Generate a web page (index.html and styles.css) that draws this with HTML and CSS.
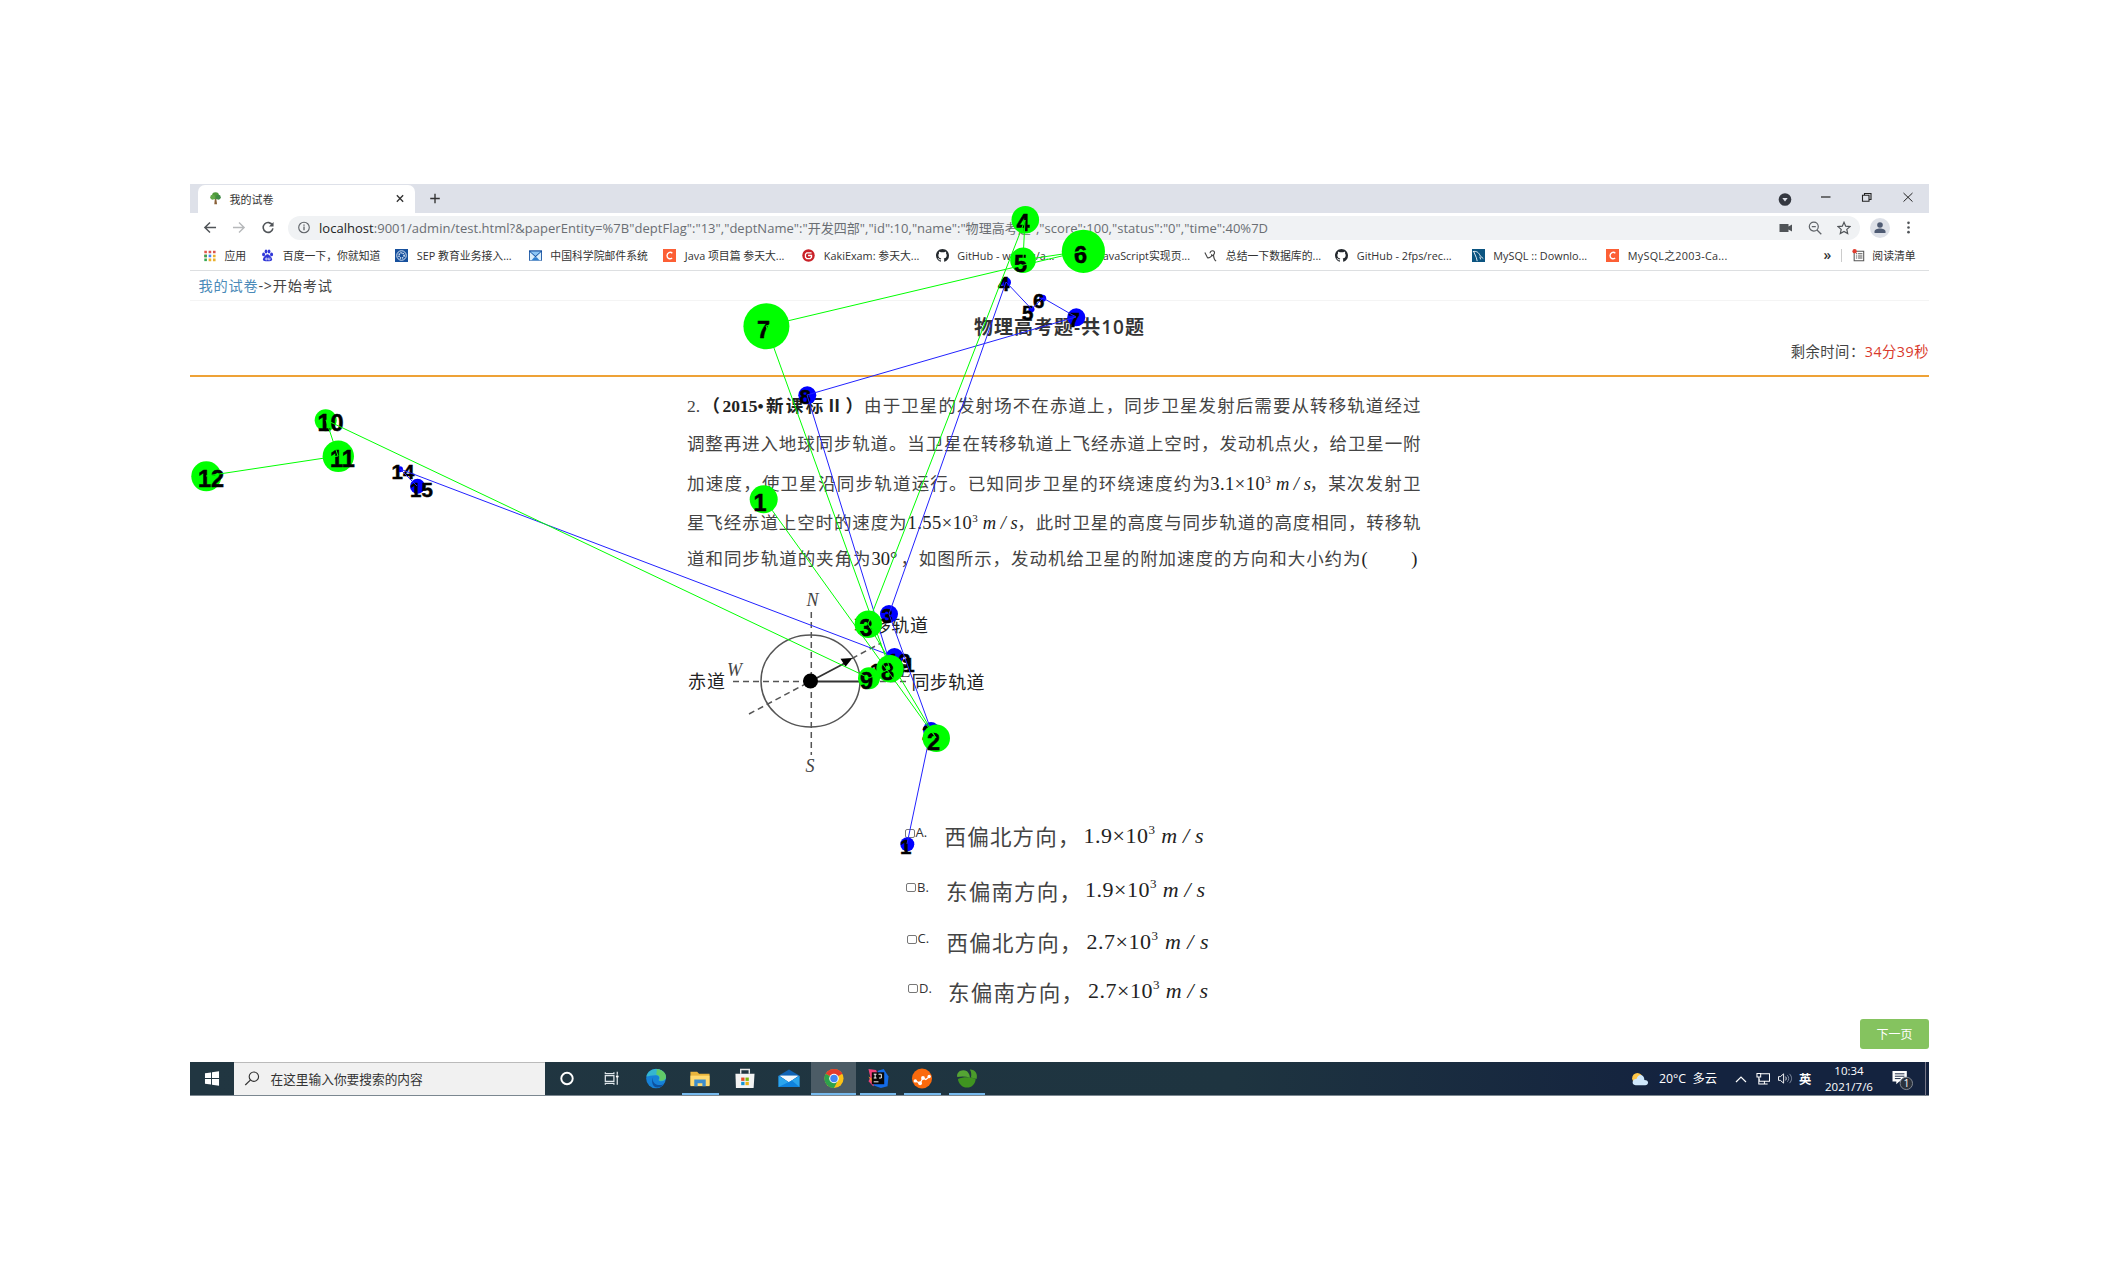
FILE: index.html
```html
<!DOCTYPE html>
<html lang="zh-CN">
<head>
<meta charset="utf-8">
<title>我的试卷</title>
<link rel="stylesheet" href="styles.css">
</head>
<body>
<svg width="0" height="0" class="defs">
  <symbol id="github" viewBox="0 0 16 16"><path fill="#24292e" d="M8 0C3.58 0 0 3.58 0 8c0 3.54 2.29 6.53 5.47 7.59.4.07.55-.17.55-.38v-1.49c-2.01.37-2.53-.49-2.69-.94-.09-.23-.48-.94-.82-1.13-.28-.15-.68-.52-.01-.53.63-.01 1.08.58 1.23.82.72 1.21 1.87.87 2.33.66.07-.52.28-.87.51-1.07-1.78-.2-3.64-.89-3.64-3.95 0-.87.31-1.59.82-2.15-.08-.2-.36-1.02.08-2.12 0 0 .67-.21 2.2.82a7.6 7.6 0 0 1 4 0c1.53-1.04 2.2-.82 2.2-.82.44 1.1.16 1.92.08 2.12.51.56.82 1.27.82 2.15 0 3.07-1.87 3.75-3.65 3.95.29.25.54.73.54 1.48v2.2c0 .21.15.46.55.38A8 8 0 0 0 16 8c0-4.42-3.58-8-8-8z"/></symbol>
  <symbol id="csdn" viewBox="0 0 16 16"><rect width="16" height="16" fill="#fc5f35"/><path d="M11.5 5.2C9 2.8 5 4.500 5 8.200c0 3.600 3.600 4.800 6.300 2.800" fill="none" stroke="#fff" stroke-width="1.700"/></symbol>
</svg>
<div class="window">
  <header class="tabs">
    <div class="tab">
      <svg class="i14" viewBox="0 0 16 16"><path d="M7.300 8h1.600l1 7H6.500z" fill="#8a6038"/><circle cx="8" cy="4.500" r="4.300" fill="#4e9a3b"/><circle cx="4.500" cy="6.500" r="3" fill="#63a94a"/><circle cx="11.500" cy="6.500" r="3" fill="#3f8a45"/></svg>
      <span>我的试卷</span>
      <svg class="close" viewBox="0 0 10 10"><path d="M1.500 1.500l7 7m0-7l-7 7" stroke="#333" stroke-width="1.500"/></svg>
    </div>
    <svg class="plus" viewBox="0 0 12 12"><path d="M6 .8v10.400M.8 6h10.400" stroke="#333" stroke-width="1.500"/></svg>
    <div class="controls">
      <svg viewBox="0 0 14 14"><circle cx="7" cy="7.500" r="6.300" fill="#343840"/><path d="M4.300 6h5.400L7 9.500z" fill="#dee1e9"/></svg>
      <svg viewBox="0 0 14 14"><path d="M2 5h9.500" stroke="#222" stroke-width="1.200"/></svg>
      <svg viewBox="0 0 14 14"><path d="M2.500 3.300h6.500v6h-6.500zM4.500 3V1.500h6.500v6h-2" fill="none" stroke="#222" stroke-width="1.100"/></svg>
      <svg viewBox="0 0 14 14"><path d="M2.500 1l9 8.600m0-8.600l-9 8.600" stroke="#222" stroke-width="1"/></svg>
    </div>
  </header>
  <div class="toolbar">
    <svg class="nav" viewBox="0 0 14 14"><path d="M13.500 7H1.500M7 1.700L1.500 7 7 12.300" fill="none" stroke="#505458" stroke-width="1.600"/></svg>
    <svg class="nav" viewBox="0 0 14 14"><path d="M.5 7h12M7 1.700L12.500 7 7 12.300" fill="none" stroke="#b6b8ba" stroke-width="1.500"/></svg>
    <svg class="nav" viewBox="0 0 14 14"><path d="M11.800 4.500A5.300 5.300 0 1 0 12.300 8" fill="none" stroke="#505458" stroke-width="1.700"/><path d="M13 1v5H8z" fill="#505458"/></svg>
    <div class="pill">
      <svg class="info" viewBox="0 0 14 14"><circle cx="7" cy="7" r="5.700" fill="none" stroke="#5f6368" stroke-width="1.200"/><path d="M7 6v4M7 3.700v1.300" stroke="#5f6368" stroke-width="1.400"/></svg>
      <span class="url"><b>localhost</b>:9001/admin/test.html?&amp;paperEntity=%7B"deptFlag":"13","deptName":"开发四部","id":10,"name":"物理高考题","score":100,"status":"0","time":40%7D</span>
      <div class="pill-icons">
        <svg viewBox="0 0 14 14"><path d="M.5 3h9v2.500L13 3.500v7L9.500 8.500V11h-9z" fill="#505458"/></svg>
        <svg viewBox="0 0 14 14"><circle cx="5.800" cy="5.600" r="4.500" fill="none" stroke="#5f6368" stroke-width="1.200"/><path d="M9 9l4.300 4.300M3.800 5.600h4" stroke="#5f6368" stroke-width="1.300"/></svg>
        <svg viewBox="0 0 14 14"><path d="M7 1.300l1.700 3.900 4.300.4-3.200 2.800.9 4.200L7 10.500l-3.700 2.100.9-4.200L1 5.600l4.300-.4z" fill="none" stroke="#505458" stroke-width="1.200"/></svg>
      </div>
    </div>
    <svg class="avatar" viewBox="0 0 20 20"><circle cx="10" cy="10" r="10" fill="#dee1e8"/><circle cx="10" cy="7" r="2.800" fill="#4f5b73"/><path d="M4.500 15v-1.500c0-4 11-4 11 0V15z" fill="#4f5b73"/></svg>
    <svg class="dots" viewBox="0 0 4 14"><circle cx="2" cy="2" r="1.400" fill="#505458"/><circle cx="2" cy="7" r="1.400" fill="#505458"/><circle cx="2" cy="12" r="1.400" fill="#505458"/></svg>
  </div>
  <nav class="bookmarks">
    <a><svg viewBox="0 0 15 15"><path d="M1.500 2h3v3h-3zM1.500 6.500h3v3h-3z" fill="#e2574c"/><path d="M6.500 2h3v3h-3zM11.500 2h3v3h-3z" fill="#d9534f"/><path d="M1.500 6.500h3v3h-3z" fill="#34a853"/><path d="M6.500 6.500h3v3h-3z" fill="#4285f4"/><path d="M11.500 6.500h3v3h-3zM6.500 11h3v3h-3zM11.500 11h3v3h-3z" fill="#eab02f"/><path d="M1.500 11h3v3h-3z" fill="#34a853"/></svg><span>应用</span></a>
    <a><svg viewBox="0 0 15 15"><g fill="#3037d8"><ellipse cx="3" cy="6.300" rx="1.700" ry="2.200"/><ellipse cx="5.800" cy="3" rx="1.600" ry="2.300"/><ellipse cx="9.300" cy="3" rx="1.600" ry="2.300"/><ellipse cx="12.200" cy="6.300" rx="1.700" ry="2.200"/><path d="M7.500 6.200c2 0 5.300 4 5.300 6s-2.300 2-5.300 2-5.300 0-5.300-2 3.300-6 5.300-6z"/></g><path d="M5.500 10.500h1.500v2H5.500zM8.500 10v2.500h1.800V10" fill="none" stroke="#fff" stroke-width=".8"/></svg><span>百度一下，你就知道</span></a>
    <a><svg viewBox="0 0 15 15"><rect width="15" height="15" fill="#17509d"/><circle cx="7.500" cy="7.500" r="5.500" fill="none" stroke="#dce7f5" stroke-width="1.100"/><circle cx="7.500" cy="7.500" r="3" fill="none" stroke="#dce7f5" stroke-dasharray="1.500 1" stroke-width="1.800"/></svg><span>SEP 教育业务接入...</span></a>
    <a><svg viewBox="0 0 15 15"><path d="M0 1.500h15v12H0z" fill="#1450a0"/><path d="M1.500 3h12L7.500 8z" fill="#8cc6f5"/><path d="M1 3.500l6.500 6 6.500-6v9.500H1z" fill="#d9eefc"/><path d="M3 13l3-3.500h3L12 13z" fill="#2f7fcf"/></svg><span>中国科学院邮件系统</span></a>
    <a><svg><use href="#csdn"/></svg><span>Java 项目篇 参天大...</span></a>
    <a><svg viewBox="0 0 15 15"><circle cx="7.500" cy="7.500" r="7.200" fill="#c92027"/><path d="M11 4.500H5.500L4 6v3.500L5.500 11h4L11 9.500V7.500H7" fill="none" stroke="#fff" stroke-width="1.500"/></svg><span>KakiExam: 参天大...</span></a>
    <a><svg><use href="#github"/></svg><span>GitHub - wuyou/a...</span></a>
    <a><svg></svg><span>JavaScript实现页...</span></a>
    <a><svg viewBox="0 0 15 15"><path d="M1 4l3 6c2 1 4-1 6-3M7 5c0-4 6-4 5 0-1 3-4 4-3 1M11 6c0 3 0 6 3 8" fill="none" stroke="#444" stroke-width="1.300"/></svg><span>总结一下数据库的...</span></a>
    <a><svg><use href="#github"/></svg><span>GitHub - 2fps/rec...</span></a>
    <a><svg viewBox="0 0 15 15"><rect width="15" height="15" fill="#0b5480"/><path d="M1 3c4-1 7 1 8.500 5l3.500 3M2 3l3 7 1 4M9 9l1 3" fill="none" stroke="#fff"/></svg><span>MySQL :: Downlo...</span></a>
    <a><svg><use href="#csdn"/></svg><span class="wide">MySQL之2003-Ca...</span></a>
    <div class="reading"><b>»</b><i></i><svg viewBox="0 0 15 15"><path d="M2.500 2.500h11v11h-11zM4.500 5.500h1.500m1 0h5M4.500 8h1.500m1 0h5M4.500 10.500h1.500m1 0h5" fill="none" stroke="#555" stroke-width="1.200"/><circle cx="3" cy="2.500" r="2.500" fill="#e03d30"/></svg><span>阅读清单</span></div>
  </nav>
  <div class="crumb"><a>我的试卷</a><span>-&gt;开始考试</span></div>
  <section class="exam-head">
    <h1>物理高考题-共10题</h1>
    <p>剩余时间：<em>34分39秒</em></p>
  </section>
  <main>
    <article class="question">
      <p class="l1"><span class="src">2.<b>（2015•新课标Ⅱ）</b></span>由于卫星的发射场不在赤道上，同步卫星发射后需要从转移轨道经过</p>
      <p class="l2">调整再进入地球同步轨道。当卫星在转移轨道上飞经赤道上空时，发动机点火，给卫星一附</p>
      <p class="l3">加速度，使卫星沿同步轨道运行。已知同步卫星的环绕速度约为<span class="f f3"><span>3.1×10<sup>3</sup></span> <i>m / s</i></span>，某次发射卫</p>
      <p class="l4">星飞经赤道上空时的速度为<span class="f f4"><span>1.55×10<sup>3</sup></span> <i>m / s</i></span>，此时卫星的高度与同步轨道的高度相同，转移轨</p>
      <p class="l5">道和同步轨道的夹角为<span class="f deg">30°</span>，如图所示，发动机给卫星的附加速度的方向和大小约为<span class="f blank">( )</span></p>
    </article>
    <svg class="orbit" viewBox="687 576 310 216">
      <g fill="none" stroke="#555" stroke-width="1.500">
        <ellipse cx="810.500" cy="681" rx="49.500" ry="46"/>
        <path d="M811.300 612v143M733 681.500h78M860 681.500h46M749 714l62-33M852 658.500l29-15.500" stroke-dasharray="6 4"/>
        <path d="M811 681.500h49M811 681l36-19" stroke="#333" stroke-width="1.800"/>
      </g>
      <circle cx="810.500" cy="681" r="7.500" fill="#000"/><path d="M852.500 658l-12 .8 5 8z" fill="#000"/>
      <g class="pole"><text x="806.500" y="606">N</text><text x="727" y="675.500">W</text><text x="805.500" y="772">S</text><text x="900" y="677">E</text></g>
      <g class="cn"><text x="688" y="688" textLength="37">赤道</text><text x="854" y="632" textLength="74">转移轨道</text><text x="911.500" y="689" textLength="73">同步轨道</text></g>
    </svg>
    <ul class="options">
      <li class="oa"><i></i><label>A.</label><span class="t">西偏北方向，</span><span class="f"><span>1.9×10<sup>3</sup></span> <i>m / s</i></span></li>
      <li class="ob"><i></i><label>B.</label><span class="t">东偏南方向，</span><span class="f"><span>1.9×10<sup>3</sup></span> <i>m / s</i></span></li>
      <li class="oc"><i></i><label>C.</label><span class="t">西偏北方向，</span><span class="f"><span>2.7×10<sup>3</sup></span> <i>m / s</i></span></li>
      <li class="od"><i></i><label>D.</label><span class="t">东偏南方向，</span><span class="f"><span>2.7×10<sup>3</sup></span> <i>m / s</i></span></li>
    </ul>
    <button class="next">下一页</button>
  </main>
  <footer class="taskbar">
    <div class="start"><svg viewBox="0 0 16 16"><path d="M.5 2.500l6.500-1v6H.5zM8 1.400l7.500-1.200v7.300H8zM.5 8.500H7v6l-6.500-1zM8 8.500h7.500v7.300L8 14.600z" fill="#fff"/></svg></div>
    <div class="search"><svg viewBox="0 0 16 16"><circle cx="10" cy="6" r="5" fill="none" stroke="#333" stroke-width="1.200"/><path d="M6.500 9.500L.8 15" stroke="#333" stroke-width="1.300"/></svg><span>在这里输入你要搜索的内容</span></div>
    <div class="apps">
      <div><svg viewBox="0 0 22 22"><circle cx="11" cy="11" r="6" fill="none" stroke="#fff" stroke-width="2"/></svg></div>
      <div><svg viewBox="0 0 22 22"><path d="M4 8h9v6H4zM4 4.500v1.500h9V4.500M4 17.500V16h9v1.500M16.500 4v3M16.500 10.500v7" fill="none" stroke="#dfe6ea" stroke-width="1.300"/><circle cx="16.500" cy="9" r="1.400" fill="#fff"/></svg></div>
      <div><svg viewBox="0 0 22 22"><circle cx="11" cy="11" r="10.300" fill="#1681d8"/><path d="M1 9C3-1 19-2 21.500 9c.6 5-6 6-8 3.500 2-2 .5-5-2.500-5C6.500 7.500 3 8.500 1 9z" fill="#35b6d0"/><path d="M12 1c7 1 10 5 9.300 9-.6 3-4 3.500-7 3 2-3 0-6-3-6z" fill="#62cb68"/><path d="M8 10c-2 5 4 10 11 7-2 3-6 4-9 3-3-2-4-7-2-10z" fill="#0e519e"/></svg></div>
      <div class="on"><svg viewBox="0 0 22 22"><path d="M1 4h7l2 2h11v12H1z" fill="#e8b43c"/><path d="M1 8h20v11H1z" fill="#ffda70"/><path d="M5 19v-7h12v7h-3.500v-3h-5v3z" fill="#3d8dcc"/></svg></div>
      <div><svg viewBox="0 0 22 22"><path d="M1 6h20l-1 15H1.500z" fill="#f3f3f3"/><path d="M6.500 6V1.500h9V6" fill="none" stroke="#e7e7e7" stroke-width="1.500"/><path d="M7 10h3.500v3.500H7z" fill="#e44c24"/><path d="M11.500 10H15v3.500h-3.500z" fill="#7cb80b"/><path d="M7 14.500h3.500V18H7z" fill="#1595d5"/><path d="M11.500 14.500H15V18h-3.500z" fill="#eeb316"/></svg></div>
      <div><svg viewBox="0 0 22 22"><path d="M0 8l11-6.500L22 8v12H0z" fill="#1063b5"/><path d="M1 8h20L11 15z" fill="#f4f8fc"/><path d="M0 8l11 7 11-7v12H0z" fill="#2ba5ed"/><path d="M2 8h18l-9 6.500z" fill="#f4f8fc"/><path d="M0 20L14 13l8 7z" fill="#0f82dd"/></svg></div>
      <div class="on active"><svg viewBox="0 0 22 22"><circle cx="11" cy="11" r="10" fill="#fbc116"/><path d="M11 11L2.300 6a10 10 0 0 1 17.400 0z" fill="#e33b2e"/><path d="M11 11L2.300 6A10 10 0 0 0 11 21l4-8z" fill="#2da14c"/><path d="M11 6h8.700l-1-1.500H11z" fill="#e33b2e"/><circle cx="11" cy="11" r="5" fill="#fff"/><circle cx="11" cy="11" r="3.900" fill="#4285f4"/></svg></div>
      <div class="on"><svg viewBox="0 0 22 22"><path d="M1 1l8 1 3 8-6 9-5-5 2-4z" fill="#f0417a"/><path d="M11 3l6-2 5 8-1 10-7 2-8-3z" fill="#146be8"/><path d="M1 9l4 2v5z" fill="#fb8734"/><rect x="4.500" y="4.500" width="13" height="12.500" fill="#080808"/><path d="M6.500 6.500h3M8 6.500v4M6.500 10.500h3M11.500 6.500h3v4h-2.500M6.500 14.500h5" fill="none" stroke="#fff"/></svg></div>
      <div class="on"><svg viewBox="0 0 22 22"><circle cx="11" cy="11" r="10.500" fill="#fb6a0c"/><path d="M4 13.500l5 2.500 3-5.500 3 1.500 4-3" fill="none" stroke="#fff" stroke-width="1.300"/><g fill="#fff"><circle cx="4" cy="13.500" r="1.800"/><circle cx="9" cy="16" r="2"/><circle cx="12" cy="10.500" r="2"/><circle cx="18.500" cy="9" r="1.800"/></g></svg></div>
      <div class="on"><svg viewBox="0 0 22 22"><path d="M1.500 11.500c5-2.500 14-2.500 18.500 0 0 5-4 9-9 9s-9-4-9.500-9z" fill="#3f9420"/><path d="M.8 9.500C-.5 4 6 .5 11 3.500c2 2 3 4 3 6.500-5-1.500-9-1.500-13.200-.5z" fill="#55a534"/><path d="M14 1.500c6 0 8.500 5 7 10l-6-1.500c1-3 .5-6-1-8.500z" fill="#4b9c2b"/></svg></div>
    </div>
    <div class="tray">
      <svg class="weather" viewBox="0 0 20 16"><circle cx="7" cy="7" r="6" fill="#ffc646"/><path d="M5 15c-6-1-3-8 1-7 2-7 9-5 9 1 6 0 5 6 1 6z" fill="#cfe7fb"/></svg>
      <span class="temp">20°C&nbsp; 多云</span>
      <svg class="caret" viewBox="0 0 12 12"><path d="M1 9l5-5 5 5" fill="none" stroke="#fff" stroke-width="1.200"/></svg>
      <svg class="mon" viewBox="0 0 16 14"><path d="M5 2h10v8H4V7M6 13h7M9.500 10v3M1.500 1.500h4v4h-4zM3.500 5.500V13H6" fill="none" stroke="#fff" stroke-width="1.100"/></svg>
      <svg class="vol" viewBox="0 0 16 14"><path d="M1 5h2l3.500-3v10L3 9H1z" fill="none" stroke="#fff"/><path d="M8.500 5c1 1 1 3 0 4" fill="none" stroke="#fff"/><path d="M10.500 3.500c2 2 2 5 0 7M12.800 2c3 3 3 7 0 10" fill="none" stroke="#8792a5"/></svg>
      <b class="ime">英</b>
      <div class="clock"><span>10:34</span><span>2021/7/6</span></div>
      <svg class="note" viewBox="0 0 22 22"><path d="M0 1h15v11H7l-3 3v-3H0z" fill="#fff"/><path d="M2.500 4h10M2.500 6.500h10M2.500 9h6" stroke="#14233f"/><circle cx="14.500" cy="14" r="6.500" fill="#2b323c" stroke="#848b95"/><text x="11.500" y="18">1</text></svg>
      <i class="desk"></i>
    </div>
  </footer>
</div>
<svg class="gaze" viewBox="0 0 2120 1280">
  <g class="blue">
    <circle cx="907.300" cy="844.300" r="7"/><circle cx="931" cy="730" r="8"/><circle cx="889" cy="614" r="9"/><circle cx="1006" cy="282.300" r="5"/><circle cx="1031.500" cy="309.300" r="3"/><circle cx="1042.700" cy="298.300" r="3.500"/><circle cx="1076.300" cy="317.300" r="9"/><circle cx="807.300" cy="395.300" r="9"/><circle cx="894.500" cy="657" r="9"/><circle cx="400" cy="469.300" r="3"/><circle cx="417.500" cy="486.300" r="7.500"/>
    <g class="n"><text x="900" y="853.500">1</text><text x="922" y="740">2</text><text x="881.500" y="622.500">3</text><text x="998" y="291">4</text><text x="1022" y="320">5</text><text x="1033" y="308">6</text><text x="1068.500" y="326.500">7</text><text x="799.500" y="404">8</text><text x="870" y="678">10</text><text x="893" y="672">11</text><text x="887.500" y="668">13</text><text x="391.500" y="478.500">14</text><text x="410" y="496.500">15</text></g>
    <path d="M907 844L931 730L889 614L1006 282L1031.500 309L1043 298L1076 317L807 395L888 657L894.500 657L400 469L417 486"/>
  </g>
  <g class="green">
    <circle cx="763.700" cy="499.300" r="14"/><circle cx="936.300" cy="738.300" r="13.700"/><circle cx="868.300" cy="624.300" r="13.700"/><circle cx="1025.300" cy="219.700" r="13.800"/><circle cx="1023" cy="260.300" r="12.800"/><circle cx="1083.400" cy="251.300" r="21.600"/><circle cx="766.400" cy="326.300" r="23"/><circle cx="869" cy="678.300" r="11"/><circle cx="890" cy="668.700" r="13.700"/><circle cx="325.700" cy="420.300" r="11"/><circle cx="338.300" cy="456.300" r="15.700"/><circle cx="206.300" cy="476.300" r="15"/>
    <g class="n"><text x="753.500" y="510.500">1</text><text x="927" y="749.500">2</text><text x="859.500" y="635.500">3</text><text x="1016.500" y="230.500">4</text><text x="1014" y="271.500">5</text><text x="1074" y="262.500">6</text><text x="757" y="337.500">7</text><text x="881" y="679.500">8</text><text x="860" y="688.500">9</text><text x="317.500" y="431">10</text><text x="330" y="467">11</text><text x="198" y="487">12</text></g>
    <path d="M764 499L936 738L868 624L1025 220L1023 260L1083 251L766 326L890 669L869 678L326 420L338 456L206 476"/>
  </g>
</svg>
</body>
</html>
```
FILE: styles.css
```css
* { box-sizing: border-box; }
body { margin: 0; width: 2120px; height: 1280px; padding: 184px 0 0 190px; background: #fff; overflow: hidden; font-family: "Open Sans", "Noto Sans CJK SC", sans-serif; color: #333; }
.defs { position: absolute; }
p, h1, ul { margin: 0; padding: 0; }
svg { display: block; flex: none; }
.window { width: 1739px; height: 912px; display: flex; flex-direction: column; white-space: nowrap; }
.window > * { flex: none; }

.tabs { height: 29px; background: #dee1e9; display: flex; align-items: center; padding-left: 7.5px; }
.tab { width: 217px; height: 28px; align-self: flex-end; background: #fff; border-radius: 7px 7px 0 0; display: flex; align-items: center; padding: 0 10px 1px; font-size: 11px; }
.i14 { width: 15px; height: 13px; margin-right: 7px; }
.close { width: 10px; height: 9px; margin-left: auto; }
.plus { width: 12px; height: 11px; margin-left: 14px; }
.controls { margin-left: auto; display: flex; gap: 27px; padding-right: 14px; }
.controls svg { width: 14px; height: 14px; }
.toolbar { height: 29px; display: flex; align-items: center; padding: 0 18px 0 13px; }
.nav { width: 14px; height: 13px; margin-right: 15px; }
.pill { width: 1572px; height: 24px; margin-left: -2px; border-radius: 12px; background: #f0f2f4; display: flex; align-items: center; padding: 0 9px; }
.info { width: 14px; height: 13px; margin-right: 8px; }
.url { font-size: 13px; letter-spacing: .03px; color: #6a6e73; }
.url b { font-weight: 400; color: #222; }
.pill-icons { margin-left: auto; display: flex; gap: 15px; }
.pill-icons svg { width: 14px; height: 14px; }
.avatar { width: 20px; height: 20px; margin-left: 10px; }
.dots { width: 5px; height: 13px; margin-left: auto; }
.bookmarks { height: 28.500px; padding-bottom: 1px; border-bottom: 1.5px solid #dddfe1; display: grid; grid-template-columns: 58.3px 134px 133.500px 134.500px 139px 133.500px 142.500px 126px 131px 136.500px 134.500px 1fr 107.500px; align-items: center; padding-left: 12px; font-size: 10.850px; }
.bookmarks a { display: flex; align-items: center; gap: 7.500px; }
.bookmarks svg { width: 15px; height: 13px; }
.wide { letter-spacing: .25px; }
.reading { display: flex; align-items: center; }
.reading b { font-size: 14px; margin-left: 2px; font-weight: 600; line-height: 1; }
.reading i { width: 1px; height: 13px; background: #ccc; margin: 0 9px 0 10px; }
.reading svg { margin-right: 6px; }

.crumb { height: 30.500px; border-bottom: 1px solid #f4f4f4; padding-left: 8.500px; display: flex; align-items: center; font-size: 14.200px; letter-spacing: .8px; color: #444; }
.crumb a { color: #4a8ab8; }
.exam-head { height: 75.500px; border-bottom: 2.500px solid #eea236; text-align: center; padding-top: 13px; }
.exam-head h1 { font-size: 19px; line-height: 27px; letter-spacing: 1px; font-weight: 600; }
.exam-head p { text-align: right; font-size: 14.300px; letter-spacing: .5px; line-height: 22px; color: #444; }
.exam-head em { font-style: normal; color: #d9392b; }

main { height: 685.500px; padding: 11.500px 0 0 497px; display: flex; flex-direction: column; align-items: flex-start; }
main > * { flex: none; }
.question { width: 733.500px; font-family: "Liberation Serif", "Noto Sans CJK SC", serif; font-size: 17.500px; color: #444; }
.question p { text-align-last: justify; }
.l1 { height: 37.500px; line-height: 37px; }
.l2 { height: 39.500px; line-height: 37px; }
.l3 { height: 39px; line-height: 39px; }
.l4 { height: 37px; line-height: 38px; }
.l5 { height: 35px; line-height: 36px; }
.src { display: inline-block; width: 176px; }
.src b { font-weight: 700; color: #222; }
.f { display: inline-block; font-family: "Liberation Serif", serif; font-size: 18.500px; font-weight: 400; color: #222; text-align-last: justify; }
.f span { letter-spacing: .5px; }
.f sup { font-size: 11px; line-height: 0; vertical-align: 7px; }
.f3 { width: 98px; margin-left: -1px; }
.f4 { width: 109px; }
.deg { width: 28px; }
.blank { width: 56px; margin-right: 3px; }
.orbit { width: 310px; height: 216px; }
.pole { font: italic 18px "Liberation Serif", serif; fill: #444; }
.cn { font: 18px "Noto Sans CJK SC", sans-serif; fill: #222; }
.options { list-style: none; margin-left: 217.500px; margin-top: 16px; }
.options li { display: flex; align-items: center; }
.options li > i { width: 10px; height: 9px; border: 1px solid #777; border-radius: 2px; margin-top: -5px; }
.options label { font-size: 13px; width: 30px; padding-left: 1px; margin-top: -7px; }
.options .t { font: 21.500px "Noto Sans CJK SC", sans-serif; color: #444; letter-spacing: 1.200px; width: 139px; }
.options .f { font-size: 22px; width: 120px; }
.options .f sup { font-size: 13px; vertical-align: 9px; }
.oa { height: 55px; }
.ob { height: 54.500px; padding-left: 1.500px; }
.oc { height: 48.500px; padding-left: 2px; }
.oc .t, .od .t { width: 140px; }
.oc .f, .od .f { width: 122px; }
.od { height: 50px; padding-left: 3.500px; }
.od .f { width: 120px; }
.next { margin: 3px 0 0 1173px; width: 69px; height: 30px; border: 0; border-radius: 3px; background: #85c35f; color: #fff; font: 12px "Noto Sans CJK SC", sans-serif; padding: 0 0 2px; }

.taskbar { height: 34px; background: linear-gradient(90deg, #213641, #1e3440 60%, #14233f 85%); border-bottom: 1px solid #7b8790; display: flex; }
.start { width: 43.500px; display: flex; align-items: center; justify-content: center; }
.start svg { width: 16px; height: 15px; }
.search { width: 311.500px; background: #f1f1f1; border-top: 1px solid #bbb; display: flex; align-items: center; gap: 10.500px; padding: 0 0 2px 10.500px; font-size: 12.700px; }
.search svg { width: 16px; height: 15px; }
.apps { display: flex; }
.apps > div { width: 44.400px; display: flex; align-items: center; justify-content: center; position: relative; }
.apps svg { width: 22px; height: 21px; }
.on::after { content: ""; position: absolute; left: 4px; right: 4px; bottom: 0; height: 2px; background: #76b9ed; }
.apps .active { background: #4c5c66; }
.active::after { left: 0; right: 0; }
.tray { margin-left: auto; display: flex; align-items: center; color: #fff; font-size: 12.300px; }
.weather { width: 20px; height: 14px; margin-right: 9px; }
.temp { width: 76px; padding-bottom: 1px; }
.caret { width: 12px; height: 12px; margin-right: 8px; }
.mon { width: 16px; height: 13px; margin-right: 6px; }
.vol { width: 16px; height: 13px; margin-right: 6px; }
.ime { width: 13px; font-weight: 600; }
.clock { width: 74px; display: flex; flex-direction: column; align-items: center; line-height: 16px; font-size: 11.500px; }
.note { width: 22px; height: 21px; margin: 3px 11px 0 6px; }
.note text { fill: #fff; font-size: 11px; }
.desk { width: 4px; height: 34px; border-left: 1px solid #778; }

.gaze { position: absolute; left: 0; top: 0; width: 2120px; height: 1280px; }
.gaze .n { fill: #000; font-family: "Liberation Sans", sans-serif; font-weight: 700; stroke: #000; stroke-width: .5; }
.gaze path { fill: none; stroke-width: 1; }
.blue circle { fill: #00f; }
.blue path { stroke: #22f; }
.blue .n { font-size: 20.500px; }
.green circle { fill: #0f0; }
.green path { stroke: #0f0; }
.green .n { font-size: 23.500px; }
```
